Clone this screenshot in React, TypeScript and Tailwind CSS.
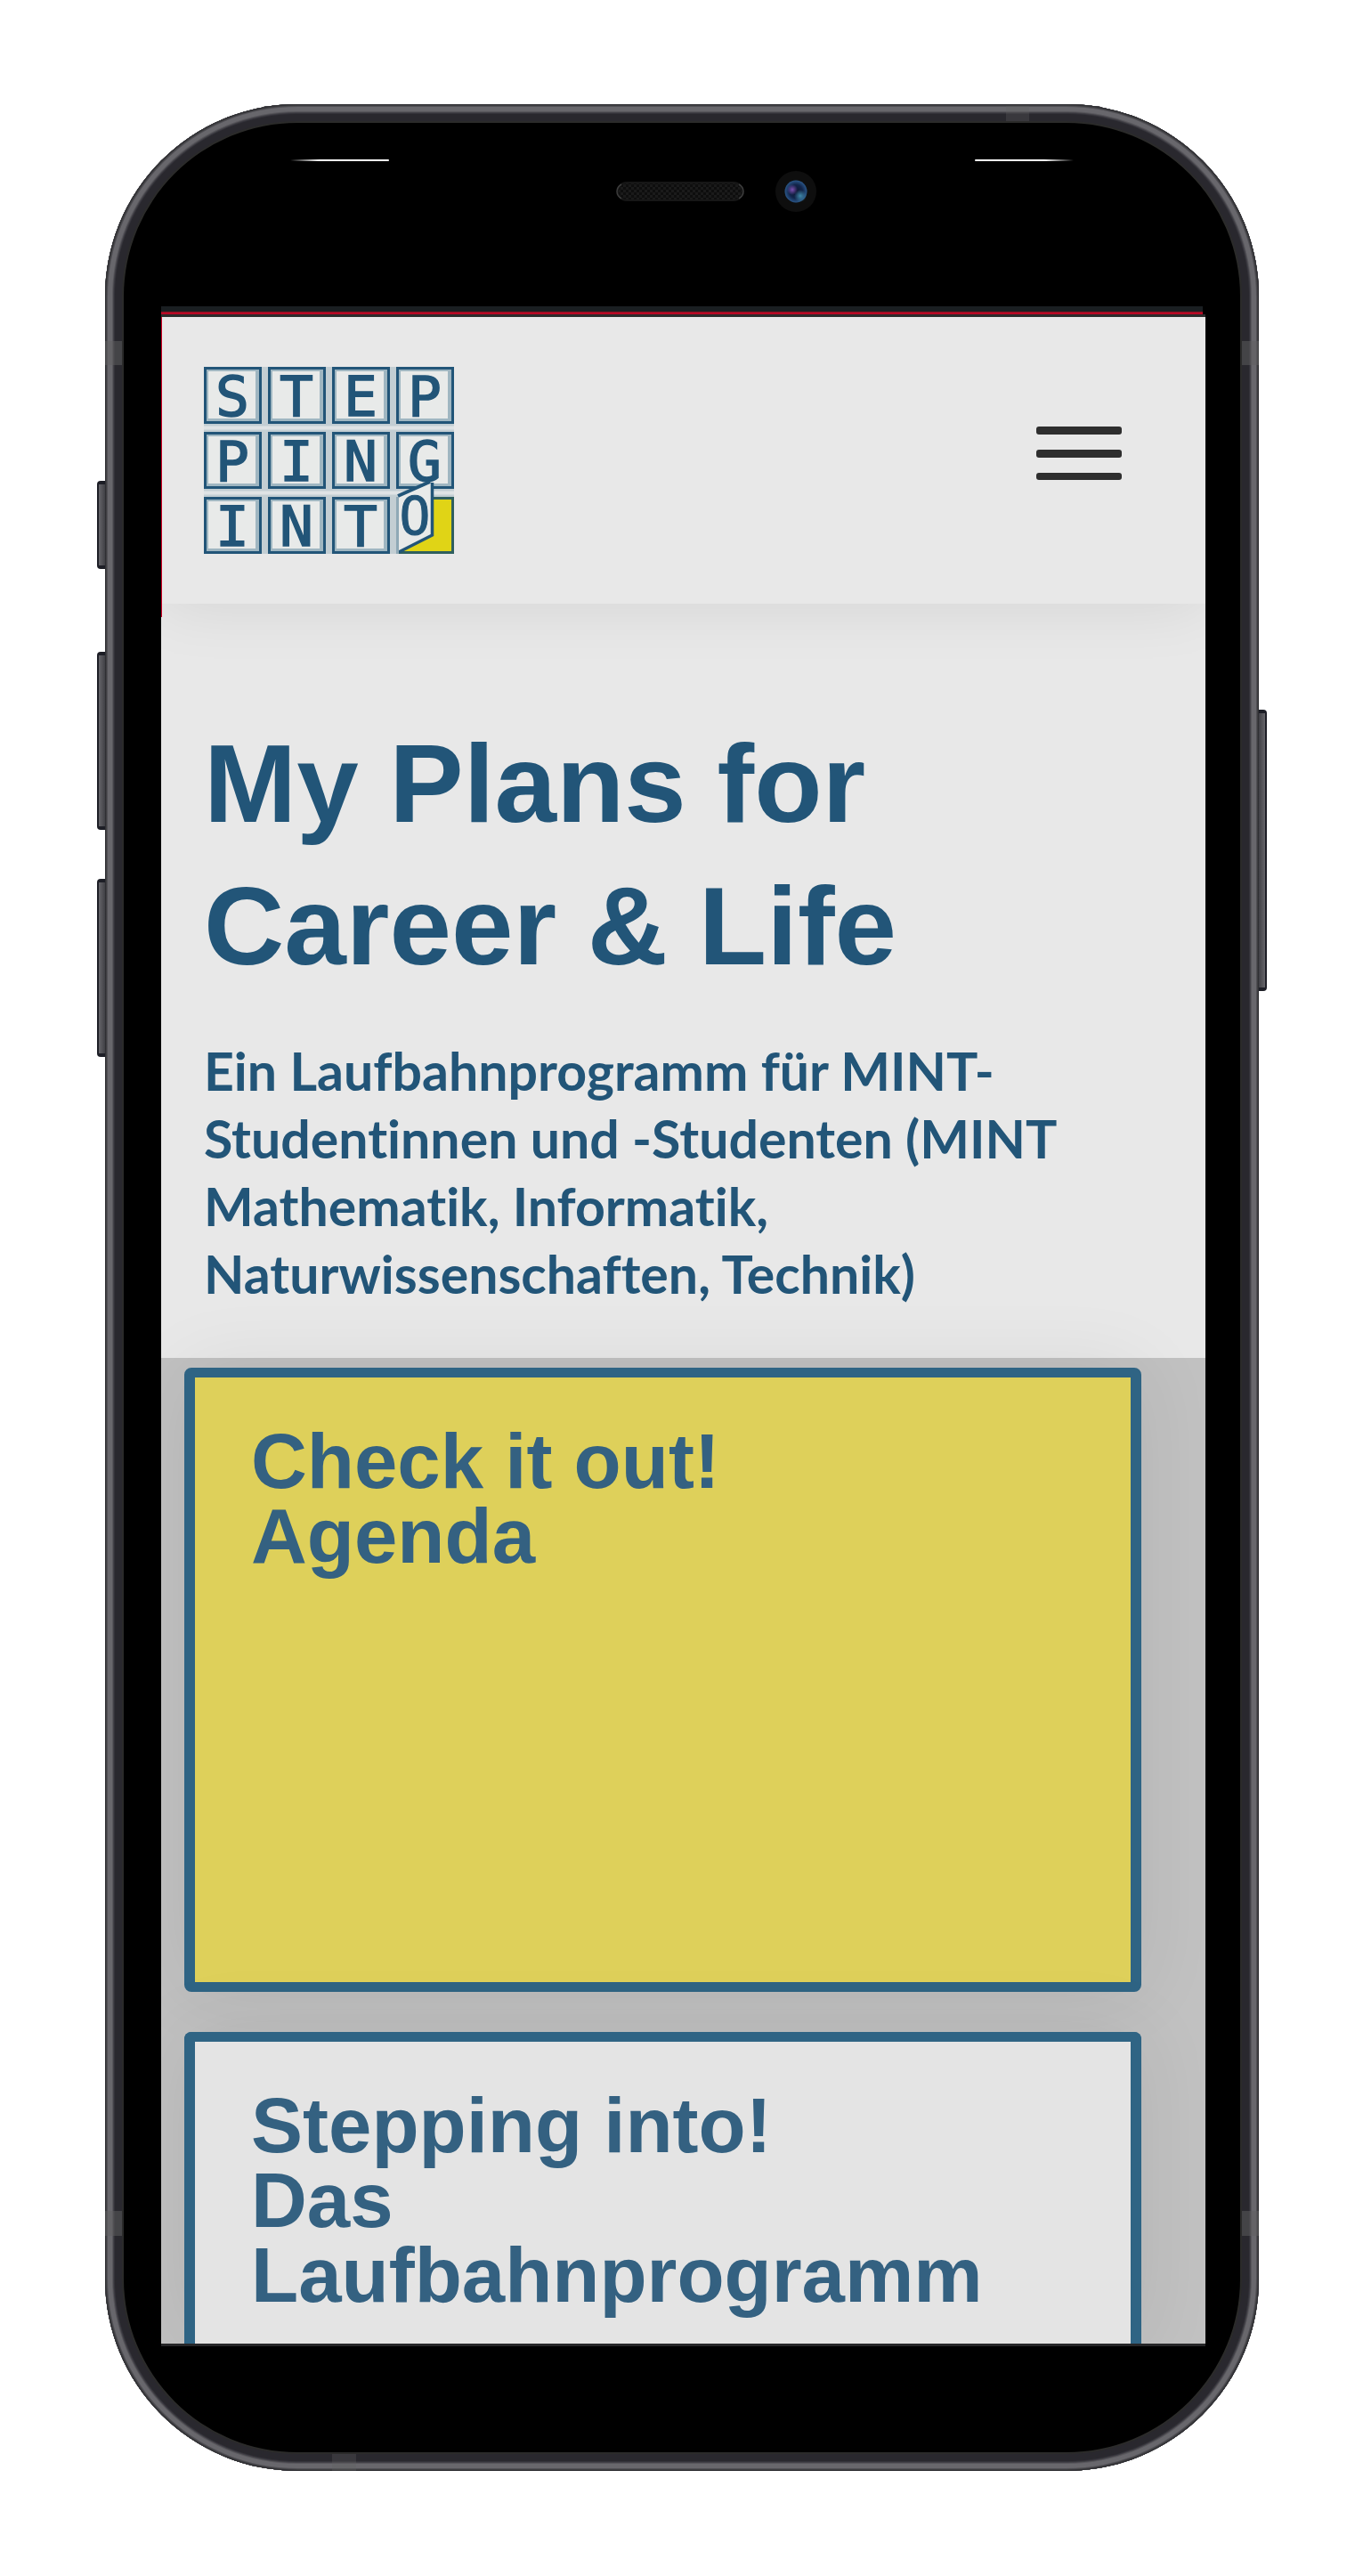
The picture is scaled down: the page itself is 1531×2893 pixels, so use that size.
const INK = '#225578';

const tiles = [
  { x: 0, y: 0, c: 'S' },
  { x: 72, y: 0, c: 'T' },
  { x: 144, y: 0, c: 'E' },
  { x: 216, y: 0, c: 'P' },
  { x: 0, y: 73, c: 'P' },
  { x: 72, y: 73, c: 'I' },
  { x: 144, y: 73, c: 'N' },
  { x: 216, y: 73, c: 'G' },
  { x: 0, y: 146, c: 'I' },
  { x: 72, y: 146, c: 'N' },
  { x: 144, y: 146, c: 'T' },
];

function Logo() {
  return (
    <svg viewBox="0 0 281 210" className="block h-[210px] w-[281px]" role="img" aria-label="Stepping into">
      <rect width="281" height="210" fill="#c3ced3" />
      <path d="M0 68.500H281M0 141.500H281" stroke="#dfe3e5" strokeWidth="4" />
      {tiles.map((t) => (
        <g key={`${t.x}-${t.y}`}>
          <rect x={t.x} y={t.y} width="65" height="64" fill="#9fb6c1" />
          <rect x={t.x + 1.5} y={t.y + 1.5} width="62" height="61" fill="none" stroke={INK} strokeWidth="3" />
          <rect x={t.x + 5} y={t.y + 5} width="53" height="53" fill="#e8eae9" />
        </g>
      ))}
      <rect x="217.500" y="147.500" width="62" height="61" fill="#e0d416" stroke="#2f5f5f" strokeWidth="3" />
      <g
        fill={INK}
        stroke={INK}
        strokeWidth="1.500"
        fontSize="63"
        textAnchor="middle"
        fontFamily="'DejaVu Sans Mono', monospace"
      >
        {tiles.map((t) => (
          <text key={`${t.x}-${t.y}`} x={t.x + 32} y={t.y + 55}>
            {t.c}
          </text>
        ))}
      </g>
      <path d="M217 146 256 130V189L218 208Z" fill="#e8eae9" />
      <path d="M218 145 254 129" stroke={INK} strokeWidth="4" />
      <path d="M256.500 130V189L219 208" fill="none" stroke={INK} strokeWidth="3.500" />
      <path d="M217.500 146V210" stroke="#8fa9b6" strokeWidth="3" />
      <text
        x="237"
        y="188"
        fill={INK}
        stroke={INK}
        strokeWidth="1"
        fontSize="58"
        textAnchor="middle"
        fontFamily="'DejaVu Sans Mono', monospace"
      >
        O
      </text>
    </svg>
  );
}

function MenuButton() {
  return (
    <button type="button" aria-label="Menu" className="flex w-24 flex-col gap-[17px]">
      <span className="h-[9px] w-full rounded-[3px] bg-[#2e2e2e]" />
      <span className="h-[9px] w-full rounded-[3px] bg-[#2e2e2e]" />
      <span className="h-[8px] w-full rounded-[3px] bg-[#2e2e2e]" />
    </button>
  );
}

const cardTitle = "font-['Liberation_Sans',Arial,sans-serif] text-[87px] leading-[84px] font-bold text-[#346181]";

function SideKeys() {
  const left =
    'w-[9px] rounded-l-[4px] border-y-4 border-l-2 border-[#1d1e26] bg-gradient-to-r from-[#66656a] to-[#414146]';
  return (
    <>
      <div className="absolute right-full top-0 flex flex-col items-end pt-[423px]">
        <span className={`${left} h-[99px]`} />
        <span className={`${left} mt-[93px] h-[200px]`} />
        <span className={`${left} mt-[55px] h-[200px]`} />
      </div>
      <div className="absolute left-full top-0 pt-[680px]">
        <span className="block h-[316px] w-[9px] rounded-r-[4px] border-y-4 border-r-2 border-[#1d1e26] bg-gradient-to-l from-[#66656a] to-[#414146]" />
      </div>
    </>
  );
}

function AntennaBands() {
  const side = 'w-[19px] bg-[#5f5f5f]/50';
  return (
    <div className="absolute inset-0 flex flex-col justify-between" aria-hidden="true">
      <div className="flex justify-end pr-[258px] pt-[2px]">
        <span className="h-[17px] w-[26px] bg-[#5f5f5f]/30" />
      </div>
      <div className="flex grow flex-col justify-between pb-[245px] pt-[247px]">
        <div className="flex justify-between">
          <span className={`${side} h-[27px]`} />
          <span className={`${side} h-[27px]`} />
        </div>
        <div className="flex justify-between">
          <span className={`${side} h-[28px]`} />
          <span className={`${side} h-[28px]`} />
        </div>
      </div>
      <div className="flex pl-[255px]">
        <span className="h-[19px] w-[27px] bg-[#5f5f5f]/30" />
      </div>
    </div>
  );
}

function TopBezel() {
  return (
    <div className="relative flex h-[206px] flex-col pt-[41px]">
      <div className="flex justify-between px-[187px]">
        <span className="h-[2px] w-[111px] rounded-full bg-gradient-to-r from-transparent via-white via-30% to-white" />
        <span className="h-[2px] w-[111px] rounded-full bg-gradient-to-l from-transparent via-white via-30% to-white" />
      </div>
      <div className="mt-[11px] flex justify-center pl-[80px]">
        <svg viewBox="0 0 230 48" className="h-12 w-[230px]" aria-hidden="true">
          <defs>
            <pattern id="mesh" width="6" height="6" patternUnits="userSpaceOnUse">
              <rect width="6" height="6" fill="#0e0e0e" />
              <rect width="3" height="3" fill="#1a1a1a" />
              <rect x="3" y="3" width="3" height="3" fill="#1a1a1a" />
            </pattern>
            <radialGradient id="lens">
              <stop offset="0" stopColor="#0d1430" />
              <stop offset="0.600" stopColor="#12254a" />
              <stop offset="1" stopColor="#2a5688" />
            </radialGradient>
            <radialGradient id="violet">
              <stop offset="0" stopColor="#7a4fae" />
              <stop offset="1" stopColor="#7a4fae" stopOpacity="0" />
            </radialGradient>
            <radialGradient id="cyan">
              <stop offset="0" stopColor="#3f88a8" />
              <stop offset="1" stopColor="#3f88a8" stopOpacity="0" />
            </radialGradient>
          </defs>
          <rect x="3" y="13" width="140" height="20" rx="10" fill="url(#mesh)" stroke="#161616" strokeWidth="2" />
          <path d="M7 15Q2 18 2 23T7 31M139 15Q144 18 144 23T139 31" fill="none" stroke="#3c3c3c" strokeWidth="1.500" />
          <circle cx="203" cy="23" r="23" fill="#0e0e0e" />
          <circle cx="203" cy="23" r="12.500" fill="url(#lens)" />
          <circle cx="199" cy="21" r="6" fill="url(#violet)" />
          <circle cx="208" cy="28" r="7" fill="url(#cyan)" />
        </svg>
      </div>
    </div>
  );
}

export default function App() {
  return (
    <div className="bg-white pb-[118px] pl-[118px] pr-[117px] pt-[117px]">
      <div className="relative">
        <SideKeys />
        <div className="relative rounded-[216px] bg-black p-[21px] shadow-[inset_0_0_0_1px_#2f2f33,inset_0_0_0_2px_#3f3f42,inset_0_0_0_3px_#504f54,inset_0_0_0_8px_#68676c,inset_0_0_0_9px_#58575c,inset_0_0_0_10px_#424147,inset_0_0_0_11px_#34333a,inset_0_0_0_19px_#29282e,inset_0_0_0_21px_#2b2b2a]">
          <AntennaBands />
          <TopBezel />
          <div className="relative ml-[42px] mr-[39px]">
            <div className="mr-[3px] h-[6px] bg-[#1a1f22]" />
            <div className="mr-[3px] h-[3px] bg-gradient-to-b from-[#8a1022] to-[#cf0024]" />
            <div className="h-[3px] bg-[#2c2c2c]" />
            <div className="overflow-hidden bg-[#c1c1c1]">
              <header className="relative z-10 flex items-start justify-between bg-[#e8e8e8] pb-14 pl-12 pr-[94px] pt-14 shadow-[0_0_70px_rgba(0,0,0,0.09)]">
                <span className="absolute -bottom-[15px] left-0 top-0 w-px bg-[#cf0024]" />
                <a href="#home">
                  <Logo />
                </a>
                <div className="pt-[67px]">
                  <MenuButton />
                </div>
              </header>
              <section className="bg-[#e8e8e8] pb-[54px] pl-12 pr-12 pt-[122px] text-[#225578]">
                <h1 className="font-['Liberation_Sans',Arial,sans-serif] text-[125px] font-bold leading-[160px]">
                  My Plans for
                  <br />
                  Career &amp; Life
                </h1>
                <p className="mt-[45px] pb-[2px] font-[Lato,sans-serif] text-[59px] font-bold leading-[76px] [font-variant-ligatures:none]">
                  Ein Laufbahnprogramm für MINT-
                  <br />
                  Studentinnen und -Studenten (MINT
                  <br />
                  Mathematik, Informatik,
                  <br />
                  Naturwissenschaften, Technik)
                </p>
              </section>
              <main className="flex flex-col gap-[45px] pl-[26px] pr-[72px] pt-[11px]">
                <article className="h-[701px] rounded-[8px] border-x-[12px] border-y-[11px] border-[#2f6484] bg-[#ded05a] pl-[63px] pt-[52px] shadow-[0_0_90px_rgba(0,0,0,0.07)]">
                  <h2 className={cardTitle}>
                    Check it out!
                    <br />
                    Agenda
                  </h2>
                </article>
                <article className="rounded-t-[8px] border-x-[12px] border-t-[11px] border-[#2f6484] bg-[#e4e4e4] pb-[35px] pl-[63px] pt-[52px] shadow-[0_0_90px_rgba(0,0,0,0.07)]">
                  <h2 className={cardTitle}>
                    Stepping into!
                    <br />
                    Das
                    <br />
                    Laufbahnprogramm
                  </h2>
                </article>
              </main>
            </div>
            <div className="h-[3px] bg-[#262628]" />
          </div>
          <div className="h-[119px]" />
        </div>
      </div>
    </div>
  );
}
